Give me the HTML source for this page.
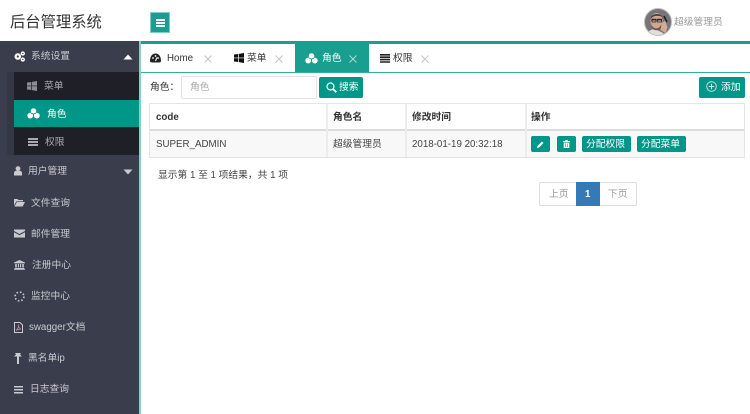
<!DOCTYPE html>
<html lang="zh"><head><meta charset="utf-8"><title>后台管理系统</title>
<style>
*{box-sizing:border-box;margin:0;padding:0}
html,body{width:750px;height:414px;overflow:hidden;background:#fff;font-family:"Liberation Sans","Noto Sans CJK SC",sans-serif;font-size:9.75px;color:#333}
.a{position:absolute;white-space:nowrap}
svg{display:block;position:absolute}
.m{color:#c8cad0;font-size:9.75px;line-height:14px}
.btn{background:#009688;border-radius:2px;color:#fff}
.th{font-size:9.75px;font-weight:bold;color:#333;line-height:14px}
.td{font-size:9.75px;color:#444;line-height:14px}
.t{font-size:9.75px;line-height:14px}
.v{position:absolute;width:2px;background:#ececec}
</style></head><body>
<!-- header -->
<div class="a" style="left:10px;top:13px;font-size:15.3px;line-height:20px;color:#333">后台管理系统</div>
<div class="a" style="left:150px;top:12px;width:20px;height:21px;background:#1a9e8f;border:1px solid #7fcdc4"></div>
<div class="a" style="left:156px;top:19px;width:9px;height:1.500px;background:#fff"></div>
<div class="a" style="left:156px;top:22px;width:9px;height:1.500px;background:#fff"></div>
<div class="a" style="left:156px;top:25px;width:9px;height:1.500px;background:#fff"></div>
<svg style="left:644px;top:8px" width="28" height="28" viewBox="0 0 28 28">
<defs><clipPath id="c"><circle cx="14" cy="14" r="13.500"/></clipPath></defs>
<g clip-path="url(#c)"><rect width="28" height="28" fill="#77757a"/>
<path d="M2 28C3 23 8 21 11 21L19 25 21 28Z" fill="#e2dfda"/>
<ellipse cx="12.500" cy="13" rx="6" ry="8" fill="#cfa78f"/>
<path d="M6.500 11C6.500 5 18 4 19 10.500L17.500 8.500C14 7.500 10 7.500 8 9.500Z" fill="#46403e"/>
<path d="M7.500 16C9 22 15 22 17.500 16L17 20C15 23 10 23 8 20Z" fill="#6b5549"/>
<path d="M7 12H18M8 11.200H12V14H8ZM13.500 11.200H17.500V14H13.500Z" fill="none" stroke="#2b2727" stroke-width=".8"/>
<path d="M17.500 16L21 12.500 23.500 19 21.500 25 16.500 22Z" fill="#d2ab95"/>
<path d="M20 8L23 14" stroke="#1c1c1c" stroke-width="1.500"/></g>
<circle cx="14" cy="14" r="13.500" fill="none" stroke="#bdbdbd" stroke-width="1"/></svg>
<div class="a t" style="left:674px;top:16px;color:#999">超级管理员</div>
<!-- green lines -->
<div class="a" style="left:140px;top:41px;width:610px;height:3px;background:#1a9e8f"></div>
<div class="a" style="left:140px;top:72px;width:610px;height:1px;background:#2fb09f"></div>
<!-- sidebar -->
<div class="a" style="left:0;top:41px;width:139px;height:373px;background:#3a3e4c"></div>
<div class="a" style="left:139px;top:41px;width:2px;height:373px;background:#7fd3cb"></div>
<div class="a" style="left:7px;top:72px;width:7px;height:83px;background:#343844"></div>
<div class="a" style="left:14px;top:72px;width:125px;height:83px;background:#1f2027"></div>
<div class="a" style="left:14px;top:100px;width:125px;height:27px;background:#009688"></div>

<svg style="left:14px;top:51px" width="11" height="11" viewBox="0 0 11 11"><circle cx="3.800" cy="5.500" r="2.200" fill="none" stroke="#fff" stroke-width="2.200"/><circle cx="8.800" cy="2.500" r="1.400" fill="none" stroke="#fff" stroke-width="1.500"/><circle cx="8.800" cy="8.500" r="1.400" fill="none" stroke="#fff" stroke-width="1.500"/></svg>
<div class="a m" style="left:31px;top:50px">系统设置</div>
<svg style="left:123px;top:54px" width="10" height="6" viewBox="0 0 10 6"><path d="M5 0.500L9.500 5.500H.5Z" fill="#fff"/></svg>

<svg style="left:27px;top:81px" width="10" height="10" viewBox="0 0 10 10" fill="#8b8d92"><path d="M0 1.500L4.300 1V4.600H0ZM5 .9L10 0V4.600H5ZM0 5.300H4.300V9L0 8.500ZM5 5.300H10V10L5 9.100Z"/></svg>
<div class="a m" style="left:44px;top:80px;color:#a8aaaf">菜单</div>

<svg style="left:27px;top:108px" width="13" height="11" viewBox="0 0 13 11" fill="#fff"><circle cx="6.500" cy="3" r="2.800"/><circle cx="3.200" cy="7.600" r="2.900"/><circle cx="9.800" cy="7.600" r="2.900"/><path d="M6.500 6.200V8M4 5.200L6.200 5.800M9 5.200L6.800 5.800" stroke="#009688" stroke-width=".8"/></svg>
<div class="a m" style="left:47px;top:108px;color:#fff">角色</div>

<svg style="left:28px;top:138px" width="10" height="9" viewBox="0 0 10 9" fill="#a8aaaf"><path d="M0 0H10V2H0ZM0 3H10V5H0ZM0 6H10V8H0Z"/></svg>
<div class="a m" style="left:45px;top:136px;color:#a8aaaf">权限</div>

<svg style="left:14px;top:166px" width="8" height="10" viewBox="0 0 8 10" fill="#c8cad0"><circle cx="4" cy="2.600" r="2.400"/><path d="M0 9.500V7C0 5.500 1.200 4.700 2.400 4.700H5.600C6.800 4.700 8 5.500 8 7V9.500Z"/></svg>
<div class="a m" style="left:28px;top:165px">用户管理</div>
<svg style="left:123px;top:169px" width="10" height="6" viewBox="0 0 10 6"><path d="M.5 .5H9.500L5 5.500Z" fill="#c8cad0"/></svg>

<svg style="left:14px;top:198px" width="11" height="9" viewBox="0 0 11 9" fill="#c8cad0"><path d="M0 1H3.500L4.500 2H9V3.400H2.400L0 7.500ZM2.900 4H11L8.600 8.500H0.400Z"/></svg>
<div class="a m" style="left:31px;top:197px">文件查询</div>

<svg style="left:14px;top:229px" width="11" height="9" viewBox="0 0 11 9" fill="#c8cad0"><path d="M0 .5H11V2L5.500 5 0 2ZM0 3.200L5.500 6.200 11 3.200V8.500H0Z"/></svg>
<div class="a m" style="left:31px;top:228px">邮件管理</div>

<svg style="left:14px;top:260px" width="11" height="10" viewBox="0 0 11 10" fill="#c8cad0"><path d="M5.500 0L11 2.500V3.400H0V2.500ZM1.200 4H2.800V7.500H1.200ZM3.900 4H5V7.500H3.900ZM6 4H7.100V7.500H6ZM8.200 4H9.800V7.500H8.200ZM.6 8H10.400V9H.6ZM0 9.200H11V10H0Z"/></svg>
<div class="a m" style="left:32px;top:259px">注册中心</div>

<svg style="left:14px;top:291px" width="11" height="11" viewBox="0 0 11 11"><circle cx="5.500" cy="5.500" r="4.400" fill="none" stroke="#c8cad0" stroke-width="1.600" stroke-dasharray="1.600 1.900"/></svg>
<div class="a m" style="left:31px;top:290px">监控中心</div>

<svg style="left:14px;top:322px" width="9" height="11" viewBox="0 0 9 11"><path d="M.5 .5H6L8.500 3V10.500H.5Z" fill="none" stroke="#c8cad0"/><path d="M2 8.500C4 7 5 4.500 4.300 3 4 4.500 6 7 7 7 5.500 7 3.500 7.500 2 8.500Z" fill="none" stroke="#d09aa8" stroke-width=".7"/></svg>
<div class="a m" style="left:29px;top:321px">swagger文档</div>

<svg style="left:14px;top:353px" width="8" height="11" viewBox="0 0 8 11" fill="#c8cad0"><path d="M1 0H7L6 1.500 8 3.500H5V11H3V3.500H0L2 1.500Z"/></svg>
<div class="a m" style="left:28px;top:352px">黑名单ip</div>

<svg style="left:14px;top:386px" width="9" height="8" viewBox="0 0 9 8" fill="#c8cad0"><path d="M0 0H9V1.500H0ZM0 3H9V4.500H0ZM0 6H9V7.500H0Z"/></svg>
<div class="a m" style="left:30px;top:383px">日志查询</div>

<!-- tabs -->
<svg style="left:150px;top:53px" width="11" height="10" viewBox="0 0 11 10"><path d="M0 8C0 3 2.500 .5 5.500 .5S11 3 11 8C11 9 10 9.500 9 9.500H2C1 9.500 0 9 0 8Z" fill="#222"/><circle cx="3" cy="5" r=".9" fill="#fff"/><circle cx="5.500" cy="3" r=".9" fill="#fff"/><circle cx="8" cy="5" r=".9" fill="#fff"/><path d="M5.500 8L7 4.500" stroke="#fff"/></svg>
<div class="a t" style="left:167px;top:52px;color:#333">Home</div>
<svg style="left:204px;top:55px" width="8" height="8" viewBox="0 0 8 8"><path d="M.5 .5L7.500 7.500M7.500 .5L.5 7.500" stroke="#c4c4c4"/></svg>
<svg style="left:234px;top:53px" width="10" height="10" viewBox="0 0 10 10" fill="#111"><path d="M0 1.500L4.300 1V4.600H0ZM5 .9L10 0V4.600H5ZM0 5.300H4.300V9L0 8.500ZM5 5.300H10V10L5 9.100Z"/></svg>
<div class="a t" style="left:247px;top:52px;color:#333">菜单</div>
<svg style="left:275px;top:55px" width="8" height="8" viewBox="0 0 8 8"><path d="M.5 .5L7.500 7.500M7.500 .5L.5 7.500" stroke="#c4c4c4"/></svg>
<div class="a" style="left:295px;top:44px;width:74px;height:28px;background:#1a9e8f"></div>
<svg style="left:305px;top:53px" width="13" height="11" viewBox="0 0 13 11" fill="#fff"><circle cx="6.500" cy="3" r="2.800"/><circle cx="3.200" cy="7.600" r="2.900"/><circle cx="9.800" cy="7.600" r="2.900"/><path d="M6.500 6.200V8M4 5.200L6.200 5.800M9 5.200L6.800 5.800" stroke="#1a9e8f" stroke-width=".8"/></svg>
<div class="a t" style="left:322px;top:52px;color:#fff">角色</div>
<svg style="left:349px;top:55px" width="8" height="8" viewBox="0 0 8 8"><path d="M.5 .5L7.500 7.500M7.500 .5L.5 7.500" stroke="#a9dbd5"/></svg>
<svg style="left:380px;top:54px" width="10" height="9" viewBox="0 0 10 9" fill="#222"><path d="M0 0H10V1.600H0ZM0 2.400H10V4H0ZM0 4.800H10V6.400H0ZM0 7.200H10V8.800H0Z"/></svg>
<div class="a t" style="left:393px;top:52px;color:#333">权限</div>
<svg style="left:421px;top:55px" width="8" height="8" viewBox="0 0 8 8"><path d="M.5 .5L7.500 7.500M7.500 .5L.5 7.500" stroke="#c4c4c4"/></svg>

<!-- toolbar -->
<div class="a t" style="left:150px;top:81px;color:#333">角色：</div>
<div class="a" style="left:181px;top:76px;width:136px;height:23px;border:1px solid #e2e2e2;border-radius:2px"></div>
<div class="a t" style="left:190px;top:81px;color:#aaa">角色</div>
<div class="a btn" style="left:319px;top:77px;width:44px;height:21px"></div>
<svg style="left:326px;top:82px" width="11" height="11" viewBox="0 0 11 11"><circle cx="4.500" cy="4.500" r="3.500" fill="none" stroke="#fff" stroke-width="1.200"/><path d="M7 7L10.300 10.300" stroke="#fff" stroke-width="1.800"/></svg>
<div class="a t" style="left:339px;top:81px;color:#fff">搜索</div>
<div class="a btn" style="left:699px;top:77px;width:46px;height:21px"></div>
<svg style="left:706px;top:81px" width="11" height="11" viewBox="0 0 11 11"><circle cx="5.500" cy="5.500" r="4.800" fill="none" stroke="#cfe9e6" stroke-width=".9"/><path d="M5.500 2.800V8.200M2.800 5.500H8.200" stroke="#cfe9e6"/></svg>
<div class="a t" style="left:721px;top:81px;color:#fff">添加</div>

<!-- table -->
<div class="a" style="left:149px;top:103px;width:596px;height:55px;border:1px solid #e4e4e4"></div>
<div class="a" style="left:150px;top:130px;width:594px;height:27px;background:#f8f8f8"></div>
<div class="a" style="left:150px;top:129px;width:594px;height:2px;background:#dcdcdc"></div>
<div class="v" style="left:326px;top:104px;height:53px"></div>
<div class="v" style="left:405px;top:104px;height:53px"></div>
<div class="v" style="left:525px;top:104px;height:53px"></div>
<div class="a th" style="left:156px;top:111px">code</div>
<div class="a th" style="left:333px;top:111px">角色名</div>
<div class="a th" style="left:412px;top:111px">修改时间</div>
<div class="a th" style="left:531px;top:111px">操作</div>
<div class="a td" style="left:156px;top:138px">SUPER_ADMIN</div>
<div class="a td" style="left:333px;top:138px">超级管理员</div>
<div class="a td" style="left:412px;top:138px">2018-01-19 20:32:18</div>
<div class="a btn" style="left:531px;top:136px;width:19px;height:16px"></div>
<svg style="left:537px;top:141px" width="7" height="7" viewBox="0 0 7 7"><path d="M0 7L.5 5 5 .5 6.500 2 2 6.500Z" fill="#fff"/></svg>
<div class="a btn" style="left:557px;top:136px;width:19px;height:16px"></div>
<svg style="left:563px;top:140px" width="7" height="8" viewBox="0 0 7 8" fill="#fff"><path d="M0 1H2L2.500 0H4.500L5 1H7V2H0ZM.7 2.500H6.300V8H.7Z"/><path d="M2.500 3.500V7M4.500 3.500V7" stroke="#009688" stroke-width=".6"/></svg>
<div class="a btn" style="left:582px;top:136px;width:49px;height:16px"></div>
<div class="a t" style="left:586px;top:138px;color:#fff">分配权限</div>
<div class="a btn" style="left:637px;top:136px;width:49px;height:16px"></div>
<div class="a t" style="left:641px;top:138px;color:#fff">分配菜单</div>

<div class="a t" style="left:158px;top:169px;color:#444">显示第 1 至 1 项结果，共 1 项</div>

<!-- pagination -->
<div class="a" style="left:539px;top:182px;width:98px;height:24px;border:1px solid #ddd;border-radius:2px"></div>
<div class="a" style="left:576px;top:182px;width:24px;height:24px;background:#337ab7"></div>
<div class="a t" style="left:549px;top:188px;color:#999">上页</div>
<div class="a t" style="left:585px;top:188px;color:#fff;font-weight:bold">1</div>
<div class="a t" style="left:608px;top:188px;color:#999">下页</div>
</body></html>
